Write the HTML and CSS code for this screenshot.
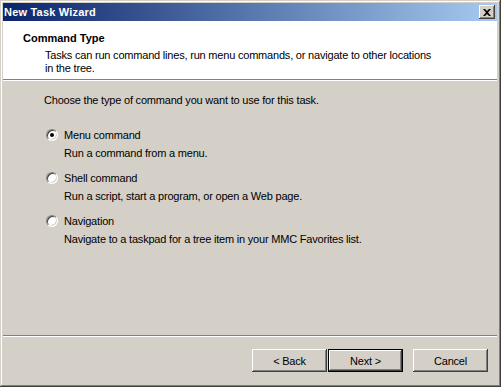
FILE: index.html
```html
<!DOCTYPE html>
<html lang="en">
<head>
  <meta charset="UTF-8" />
  <title>New Task Wizard</title>
  <link rel="stylesheet" href="styles.css">
</head>
<body>
  <div class="window">
    <div class="titlebar">
      <span class="title">New Task Wizard</span>
      <button class="close" aria-label="Close">
        <svg width="8" height="7" viewBox="0 0 8 7"><path d="M0 0h2l2 2 2-2h2L5 3.5 8 7H6L4 5 2 7H0l3-3.5z" fill="#000"/></svg>
      </button>
    </div>

    <div class="header">
      <div class="header-title">Command Type</div>
      <div class="header-desc">Tasks can run command lines, run menu commands, or navigate to other locations<br>in the tree.</div>
    </div>

    <div class="content">
      <p class="prompt">Choose the type of command you want to use for this task.</p>

      <div class="option">
        <label class="choice"><span class="radio checked"></span>Menu command</label>
        <div class="desc">Run a command from a menu.</div>
      </div>
      <div class="option">
        <label class="choice"><span class="radio"></span>Shell command</label>
        <div class="desc">Run a script, start a program, or open a Web page.</div>
      </div>
      <div class="option">
        <label class="choice"><span class="radio"></span>Navigation</label>
        <div class="desc">Navigate to a taskpad for a tree item in your MMC Favorites list.</div>
      </div>
    </div>

    <div class="footer">
      <button class="btn">&lt; Back</button>
      <button class="btn default">Next &gt;</button>
      <button class="btn cancel">Cancel</button>
    </div>
  </div>
</body>
</html>
```

FILE: styles.css
```css
html, body {
  margin: 0;
  padding: 0;
}

body {
  font-family: 'Liberation Sans', Arial, sans-serif;
  font-size: 11px;
  letter-spacing: -0.2px;
  color: #000;
  background: #d4d0c8;
}

.window {
  width: 501px;
  height: 387px;
  box-sizing: border-box;
  padding: 3px 4px 4px 3px;
  background: #d4d0c8;
  display: flex;
  flex-direction: column;
  box-shadow:
    inset -1px -1px #404040,
    inset 1px 1px #d4d0c8,
    inset -2px -2px #808080,
    inset 2px 2px #fff;
}

.titlebar {
  height: 18px;
  display: flex;
  align-items: center;
  justify-content: space-between;
  padding: 0 2px 0 0;
  background: linear-gradient(to right, #0a246a, #a6caf0);
}

.title {
  color: #fff;
  font-weight: bold;
  font-size: 11px;
  letter-spacing: 0.2px;
  padding-left: 1px;
}

.close {
  width: 16px;
  height: 14px;
  padding: 0;
  border: none;
  background: #d4d0c8;
  display: flex;
  align-items: center;
  justify-content: center;
  box-shadow:
    inset -1px -1px #404040,
    inset 1px 1px #fff,
    inset -2px -2px #808080,
    inset 2px 2px #d4d0c8;
}

.header {
  height: 58px;
  background: #fff;
  border-bottom: 1px solid #808080;
  padding: 0 0 0 20px;
}

.header-title {
  font-weight: bold;
  letter-spacing: 0;
  margin-top: 11px;
  line-height: 13px;
}

.header-desc {
  padding-left: 22px;
  margin-top: 4px;
  line-height: 13px;
}

.content {
  flex: 1;
  border-top: 1px solid #fff;
  padding: 13px 0 0 41px;
}

.prompt {
  margin: 0 0 21px;
  line-height: 13px;
}

.option {
  margin-bottom: 11px;
}

.choice {
  display: flex;
  align-items: center;
  gap: 6px;
  height: 13px;
  padding-left: 2px;
}

.radio {
  width: 12px;
  height: 12px;
  box-sizing: border-box;
  border-radius: 50%;
  background: #fff;
  border: 1px solid;
  border-color: #808080 #fff #fff #808080;
  box-shadow: inset 1px 1px #404040, inset -1px -1px #d4d0c8;
  position: relative;
}

.radio.checked::after {
  content: '';
  position: absolute;
  left: 3px;
  top: 3px;
  width: 4px;
  height: 4px;
  border-radius: 50%;
  background: #000;
}

.desc {
  padding-left: 20px;
  margin-top: 6px;
  line-height: 13px;
}

.footer {
  border-top: 1px solid #808080;
  box-shadow: inset 0 1px #fff;
  display: flex;
  justify-content: flex-end;
  padding: 13px 9px 11px 0;
}

.btn {
  width: 75px;
  height: 23px;
  margin-left: 0;
  font-family: inherit;
  font-size: 11px;
  letter-spacing: -0.2px;
  color: #000;
  background: #d4d0c8;
  border: none;
  box-shadow:
    inset -1px -1px #404040,
    inset 1px 1px #fff,
    inset -2px -2px #808080,
    inset 2px 2px #d4d0c8;
}

.btn.default {
  margin-left: 1px;
  box-shadow:
    inset 0 0 0 1px #000,
    inset -2px -2px #404040,
    inset 2px 2px #fff,
    inset -3px -3px #808080;
}

.btn.cancel {
  margin-left: 10px;
}
```
